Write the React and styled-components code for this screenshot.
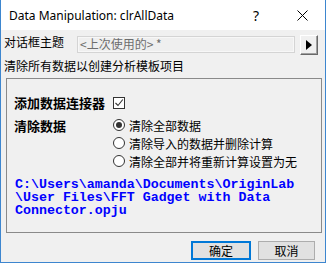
import React from "react";
import styled, { createGlobalStyle } from "styled-components";

const Global = createGlobalStyle`
  html, body { margin: 0; padding: 0; background: #f0f0f0; }
  * { box-sizing: border-box; }
`;

const Window = styled.div`
  width: 326px;
  height: 263px;
  display: flex;
  flex-direction: column;
  background: #f0f0f0;
  border: 1px solid #3d86cf;
  border-top: none;
  font-family: "Noto Sans CJK SC", "Noto Sans", sans-serif;
  font-size: 12px;
  color: #000;
  overflow: hidden;
`;

const TitleBar = styled.div`
  height: 30px;
  display: flex;
  align-items: center;
  background: #fff;
  padding-left: 8px;
  flex-shrink: 0;
`;

const TitleText = styled.span`
  font-family: "Noto Sans", "Liberation Sans", sans-serif;
  font-size: 12px;
  color: #000;
`;

const CaptionButtons = styled.div`
  margin-left: auto;
  display: flex;
  height: 100%;
`;

const CaptionButton = styled.div`
  width: 46px;
  height: 30px;
  display: flex;
  align-items: center;
  justify-content: center;
  font-family: "Noto Sans", sans-serif;
  font-size: 14px;
  color: #000;
`;

const Body = styled.div`
  display: flex;
  flex-direction: column;
  padding: 5px 7px 0 3px;
  flex: 1;
`;

const ThemeRow = styled.div`
  display: flex;
  align-items: flex-start;
  height: 20px;
`;

const ThemeLabel = styled.span`
  width: 73px;
  line-height: 14px;
  font-size: 12px;
`;

const ThemeInput = styled.div`
  margin-top: 1px;
  width: 218px;
  height: 17px;
  border: 1px solid #d4d4d4;
  box-shadow: inset 0 0 0 1px #f7f7f7;
  background: #efefef;
  color: #6d6d6d;
  font-size: 12px;
  line-height: 14px;
  padding-left: 2px;
  white-space: nowrap;
`;

const ArrowButton = styled.div`
  margin-left: 5px;
  width: 18px;
  height: 20px;
  background: #f0f0f0;
  border-top: 1px solid #ffffff;
  border-left: 1px solid #ffffff;
  border-right: 1px solid #696969;
  border-bottom: 1px solid #696969;
  box-shadow: inset -1px -1px 0 #a0a0a0;
  display: flex;
  align-items: center;
  justify-content: center;
`;

const Description = styled.div`
  margin-top: 4px;
  line-height: 14px;
  font-size: 12px;
`;

const Group = styled.div`
  margin-top: 5px;
  margin-left: 2px;
  width: 316px;
  height: 155px;
  border: 1px solid #8a8a8a;
  padding: 15px 0 0 7px;
  display: flex;
  flex-direction: column;
`;

const OptionGrid = styled.div`
  display: grid;
  grid-template-columns: 99px 1fr;
  grid-auto-rows: ${(p) => p.$row}px;
  margin-top: ${(p) => p.$mt || 0}px;
  align-items: center;
`;

const BoldLabel = styled.span`
  font-weight: 700;
  font-size: 13px;
  line-height: 17px;
`;

const CheckBox = styled.div`
  width: 12px;
  height: 12px;
  border: 1px solid #333;
  background: #fff;
  display: flex;
  align-items: center;
  justify-content: center;
`;

const RadioRow = styled.div`
  display: flex;
  align-items: center;
  gap: 4px;
  font-size: 12px;
  line-height: 17px;
`;

const RadioCircle = styled.div`
  width: 12px;
  height: 12px;
  border-radius: 50%;
  border: 1px solid #333;
  background: #fff;
  display: flex;
  align-items: center;
  justify-content: center;
  &::after {
    content: "";
    display: ${(p) => (p.$checked ? "block" : "none")};
    width: 6px;
    height: 6px;
    border-radius: 50%;
    background: #333;
  }
`;

const PathText = styled.div`
  margin-top: 8px;
  margin-left: 1px;
  font-family: "Liberation Mono", "DejaVu Sans Mono", monospace;
  font-weight: 700;
  font-size: 13.3px;
  line-height: 13px;
  color: #0000ff;
  white-space: pre;
`;

const ButtonRow = styled.div`
  display: flex;
  justify-content: flex-end;
  gap: 7px;
  margin-top: 8px;
  padding-right: 3px;
`;

const DialogButton = styled.div`
  width: ${(p) => p.$w}px;
  height: 19px;
  display: flex;
  align-items: center;
  justify-content: center;
  background: #e1e1e1;
  border: ${(p) => (p.$default ? "2px solid #0078d7" : "1px solid #adadad")};
  font-size: 12px;
`;

export default function App() {
  return (
    <>
      <Global />
      <Window>
        <TitleBar>
          <TitleText>Data Manipulation: clrAllData</TitleText>
          <CaptionButtons>
            <CaptionButton>?</CaptionButton>
            <CaptionButton>
              <svg width="11" height="11" viewBox="0 0 11 11">
                <path d="M0.5 0.5 L10.5 10.5 M10.5 0.5 L0.5 10.5" stroke="#000" strokeWidth="1" fill="none" />
              </svg>
            </CaptionButton>
          </CaptionButtons>
        </TitleBar>
        <Body>
          <ThemeRow>
            <ThemeLabel>对话框主题</ThemeLabel>
            <ThemeInput>&lt;上次使用的&gt; *</ThemeInput>
            <ArrowButton>
              <svg width="6" height="10" viewBox="0 0 6 10">
                <path d="M0 0 L6 5 L0 10 Z" fill="#000" />
              </svg>
            </ArrowButton>
          </ThemeRow>
          <Description>清除所有数据以创建分析模板项目</Description>
          <Group>
            <OptionGrid $row={17}>
              <BoldLabel>添加数据连接器</BoldLabel>
              <CheckBox>
                <svg width="10" height="10" viewBox="0 0 10 10">
                  <path d="M1.5 5 L4 7.5 L8.8 1.5" stroke="#333" strokeWidth="1.1" fill="none" />
                </svg>
              </CheckBox>
            </OptionGrid>
            <OptionGrid $row={18} $mt={5}>
              <BoldLabel>清除数据</BoldLabel>
              <RadioRow>
                <RadioCircle $checked />
                清除全部数据
              </RadioRow>
              <span />
              <RadioRow>
                <RadioCircle />
                清除导入的数据并删除计算
              </RadioRow>
              <span />
              <RadioRow>
                <RadioCircle />
                清除全部并将重新计算设置为无
              </RadioRow>
            </OptionGrid>
            <PathText>
              {"C:\\Users\\amanda\\Documents\\OriginLab\n\\User Files\\FFT Gadget with Data\nConnector.opju"}
            </PathText>
          </Group>
          <ButtonRow>
            <DialogButton $w={60} $default>确定</DialogButton>
            <DialogButton $w={57}>取消</DialogButton>
          </ButtonRow>
        </Body>
      </Window>
    </>
  );
}
